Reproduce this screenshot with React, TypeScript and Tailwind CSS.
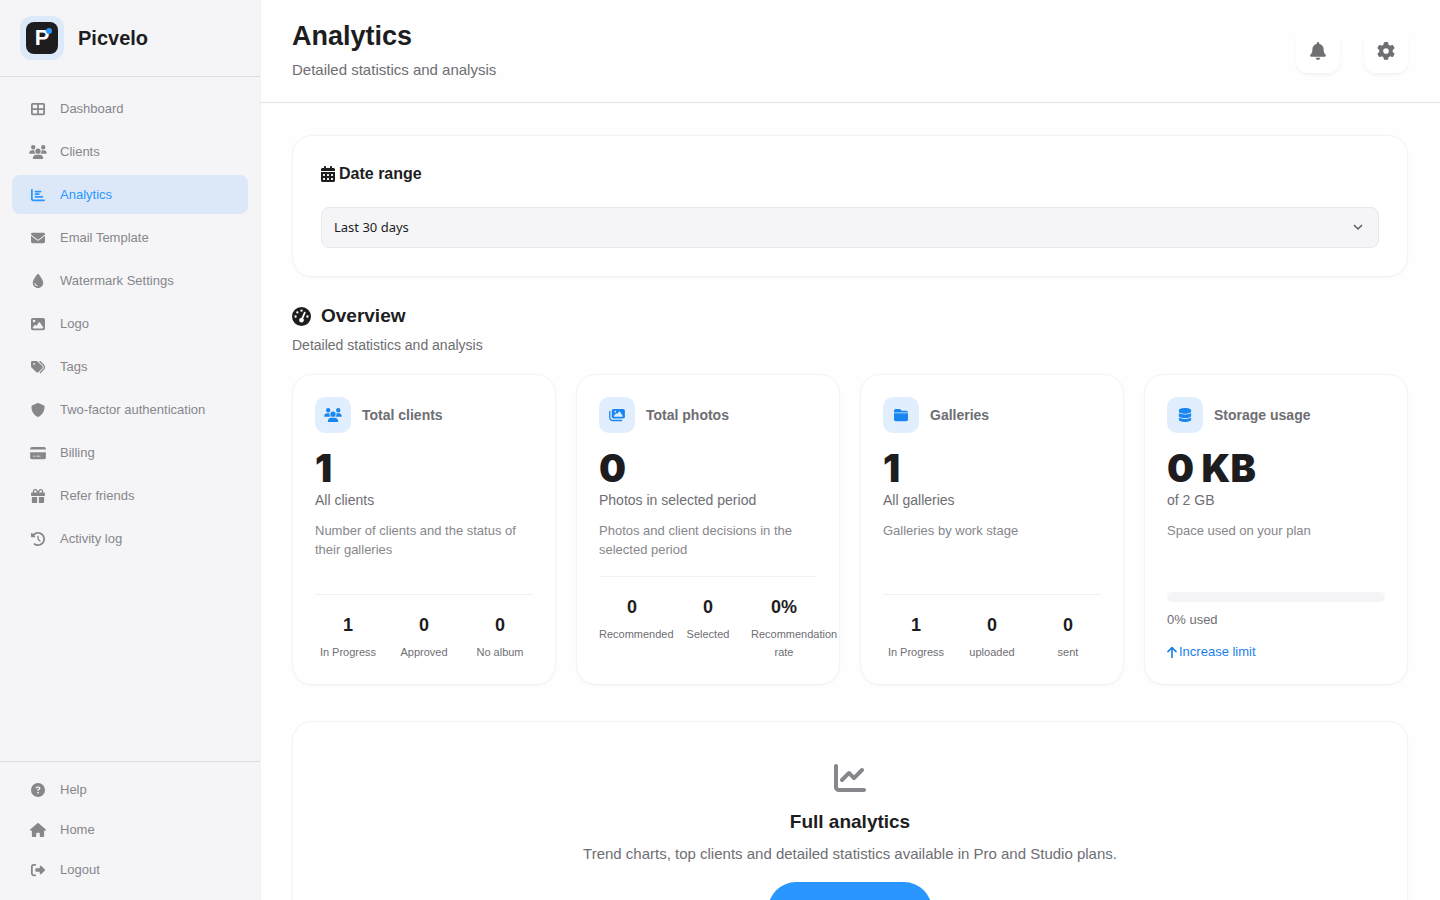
import type { ReactNode } from "react";
import type { IconType } from "react-icons";
import {
  FaArrowUp,
  FaBell,
  FaCalendarDays,
  FaChartBar,
  FaChartLine,
  FaCircleQuestion,
  FaClockRotateLeft,
  FaCreditCard,
  FaDatabase,
  FaDroplet,
  FaEnvelope,
  FaFolderClosed,
  FaGaugeHigh,
  FaGear,
  FaGift,
  FaHouse,
  FaImage,
  FaImages,
  FaRightFromBracket,
  FaShield,
  FaTableCellsLarge,
  FaTags,
  FaUsers,
} from "react-icons/fa6";

interface NavItem {
  label: string;
  icon: IconType;
  active?: boolean;
}

interface Stat {
  value: string;
  label: string;
}

const mainNav: NavItem[] = [
  { label: "Dashboard", icon: FaTableCellsLarge },
  { label: "Clients", icon: FaUsers },
  { label: "Analytics", icon: FaChartBar, active: true },
  { label: "Email Template", icon: FaEnvelope },
  { label: "Watermark Settings", icon: FaDroplet },
  { label: "Logo", icon: FaImage },
  { label: "Tags", icon: FaTags },
  { label: "Two-factor authentication", icon: FaShield },
  { label: "Billing", icon: FaCreditCard },
  { label: "Refer friends", icon: FaGift },
  { label: "Activity log", icon: FaClockRotateLeft },
];

const footerNav: NavItem[] = [
  { label: "Help", icon: FaCircleQuestion },
  { label: "Home", icon: FaHouse },
  { label: "Logout", icon: FaRightFromBracket },
];

function NavLink({ label, icon: Icon, active }: NavItem) {
  return (
    <a
      href="#"
      aria-current={active ? "page" : undefined}
      className={`flex h-[39px] items-center gap-3 rounded-lg px-4 text-[13px] font-medium ${
        active ? "bg-[#dce8f8] text-[#2997ff]" : "text-[#86868b]"
      }`}
    >
      <span className="flex w-5 justify-center text-sm">
        <Icon className="w-4.5 shrink-0" />
      </span>
      {label}
    </a>
  );
}

function Sidebar() {
  return (
    <aside className="flex w-[260px] shrink-0 flex-col bg-[#f5f5f7] shadow-[1px_0_0_#f3f3f5]">
      {/* Brand */}
      <div className="flex items-center gap-3.5 border-b border-[#dddde0] px-5 py-4">
        <div className="flex size-11 items-center justify-center rounded-xl bg-[#dce9f8]">
          <div className="relative flex size-8 items-center justify-center rounded-lg bg-[#1d1d1f]">
            <span className="text-[22px] leading-8 font-bold text-white">P</span>
            <span className="absolute top-1.5 right-1.5 size-1.5 rounded-full bg-[#2997ff]" />
          </div>
        </div>
        <span className="text-xl font-bold text-[#1d1d1f]">Picvelo</span>
      </div>

      <nav aria-label="Main" className="flex flex-1 flex-col gap-1 px-3 pt-3">
        {mainNav.map((item) => (
          <NavLink key={item.label} {...item} />
        ))}
      </nav>

      <nav aria-label="Account" className="flex flex-col gap-px border-t border-[#dddde0] px-3 pt-2 pb-[11px]">
        {footerNav.map((item) => (
          <NavLink key={item.label} {...item} />
        ))}
      </nav>
    </aside>
  );
}

function HeaderButton({ label, icon: Icon }: { label: string; icon: IconType }) {
  return (
    <button
      type="button"
      aria-label={label}
      className="flex size-11 items-center justify-center rounded-xl bg-white text-lg text-[#6e6e73] shadow-[0_2px_3px_rgba(0,0,0,0.05)]"
    >
      <Icon />
    </button>
  );
}

interface MetricCardProps {
  title: string;
  icon: IconType;
  value: string;
  caption: string;
  description: string;
  children: ReactNode;
}

function MetricCard({ title, icon: Icon, value, caption, description, children }: MetricCardProps) {
  return (
    <article className="flex min-w-0 flex-col rounded-[20px] border border-[#f3f3f4] bg-white p-[22px] shadow-[0_1px_3px_rgba(0,0,0,0.03)]">
      <div className="mb-3.5 flex items-center gap-[11px]">
        <div className="flex size-9 items-center justify-center rounded-[10px] bg-[#e0eefe] text-sm text-[#1a86f2]">
          <Icon className="w-4.5 shrink-0" />
        </div>
        <h3 className="text-sm font-bold text-[#6e6e73]">{title}</h3>
      </div>
      <p className="font-['Inter',sans-serif] text-[38px] leading-[42px] font-black text-[#1d1d1f]">{value}</p>
      <p className="text-sm leading-[22px] text-[#6e6e73]">{caption}</p>
      <p className="mt-2.5 mb-[17px] text-[13px] leading-[19px] text-[#86868b]">{description}</p>
      <div className="mt-auto">{children}</div>
    </article>
  );
}

function StatRow({ stats }: { stats: Stat[] }) {
  return (
    <dl className="grid grid-cols-3 gap-2.5 border-t border-[#f1f1f3] pt-[18px] pb-px">
      {stats.map((stat) => (
        <div key={stat.label} className="flex min-w-0 flex-col-reverse justify-end gap-1.5 text-center">
          <dt className="text-[11px] leading-[18px] font-medium text-[#6e6e73]">{stat.label}</dt>
          <dd className="text-lg leading-6 font-bold text-[#1d1d1f]">{stat.value}</dd>
        </div>
      ))}
    </dl>
  );
}

export default function App() {
  return (
    <div className="flex h-screen bg-[#fefefe] font-['Liberation_Sans',Arial,sans-serif] text-[#1d1d1f]">
      <Sidebar />

      <main className="min-w-0 flex-1 overflow-y-auto [scrollbar-width:none]">
        <header className="flex items-start justify-between border-b border-[#e5e5e7] px-8 pt-5 pb-[22px]">
          <div>
            <h1 className="text-[27px] leading-8 font-bold">Analytics</h1>
            <p className="mt-2 text-[15px] leading-5 text-[#6e6e73]">Detailed statistics and analysis</p>
          </div>
          <div className="flex gap-6 pt-[9px]">
            <HeaderButton label="Notifications" icon={FaBell} />
            <HeaderButton label="Settings" icon={FaGear} />
          </div>
        </header>

        <div className="p-8">
          {/* Date range */}
          <section className="rounded-[20px] border border-[#f3f3f4] bg-white p-7 shadow-[0_1px_3px_rgba(0,0,0,0.03)]">
            <label htmlFor="range" className="mb-6 flex items-center gap-1 text-base leading-[19px] font-bold">
              <FaCalendarDays className="w-3.5" />
              Date range
            </label>
            <div className="relative">
              <select
                id="range"
                className="block h-[41px] w-full appearance-none rounded-lg border border-[#e8e8ea] bg-[#f5f5f7] px-3 font-['Noto_Sans',sans-serif] text-[13px]"
              >
                <option>Last 30 days</option>
              </select>
              <svg
                className="pointer-events-none absolute top-3.5 right-3.5"
                width="12"
                height="12"
                viewBox="0 0 12 12"
                fill="none"
                stroke="#5c5c60"
                strokeWidth="1.5"
              >
                <path d="M1 4l4 4 4-4" />
              </svg>
            </div>
          </section>

          {/* Overview */}
          <section className="mt-7">
            <h2 className="flex items-center gap-2.5 text-[19px] leading-[22px] font-bold">
              <FaGaugeHigh />
              Overview
            </h2>
            <p className="mt-1.5 mb-[17px] text-sm leading-6 text-[#6e6e73]">Detailed statistics and analysis</p>

            <div className="grid grid-cols-4 gap-5">
              <MetricCard
                title="Total clients"
                icon={FaUsers}
                value="1"
                caption="All clients"
                description="Number of clients and the status of their galleries"
              >
                <StatRow
                  stats={[
                    { value: "1", label: "In Progress" },
                    { value: "0", label: "Approved" },
                    { value: "0", label: "No album" },
                  ]}
                />
              </MetricCard>
              <MetricCard
                title="Total photos"
                icon={FaImages}
                value="0"
                caption="Photos in selected period"
                description="Photos and client decisions in the selected period"
              >
                <StatRow
                  stats={[
                    { value: "0", label: "Recommended" },
                    { value: "0", label: "Selected" },
                    { value: "0%", label: "Recommendation rate" },
                  ]}
                />
              </MetricCard>
              <MetricCard
                title="Galleries"
                icon={FaFolderClosed}
                value="1"
                caption="All galleries"
                description="Galleries by work stage"
              >
                <StatRow
                  stats={[
                    { value: "1", label: "In Progress" },
                    { value: "0", label: "uploaded" },
                    { value: "0", label: "sent" },
                  ]}
                />
              </MetricCard>
              <MetricCard
                title="Storage usage"
                icon={FaDatabase}
                value="0 KB"
                caption="of 2 GB"
                description="Space used on your plan"
              >
                <div className="h-2.5 rounded-[5px] bg-[#f5f5f7]" />
                <p className="mt-2 text-[13px] leading-5 text-[#6e6e73]">0% used</p>
                <a href="#" className="mt-3 flex items-center gap-0.5 text-[13px] leading-5 font-medium text-[#1a7fe8]">
                  <FaArrowUp className="w-2.5" />
                  Increase limit
                </a>
              </MetricCard>
            </div>
          </section>

          {/* Upgrade */}
          <section className="mt-9 flex flex-col items-center rounded-[20px] border border-[#f3f3f4] bg-white p-10 text-center shadow-[0_1px_3px_rgba(0,0,0,0.03)]">
            <FaChartLine className="text-[32px] text-[#86868b]" />
            <h2 className="mt-4 text-[19px] leading-6 font-bold">Full analytics</h2>
            <p className="mt-2 text-[15px] leading-6 text-[#6e6e73]">
              Trend charts, top clients and detailed statistics available in Pro and Studio plans.
            </p>
            <button
              type="button"
              className="mt-4 rounded-full bg-[#2997ff] px-[37px] py-5 text-sm leading-4 font-bold text-white"
            >
              Upgrade plan
            </button>
          </section>
        </div>
      </main>
    </div>
  );
}
